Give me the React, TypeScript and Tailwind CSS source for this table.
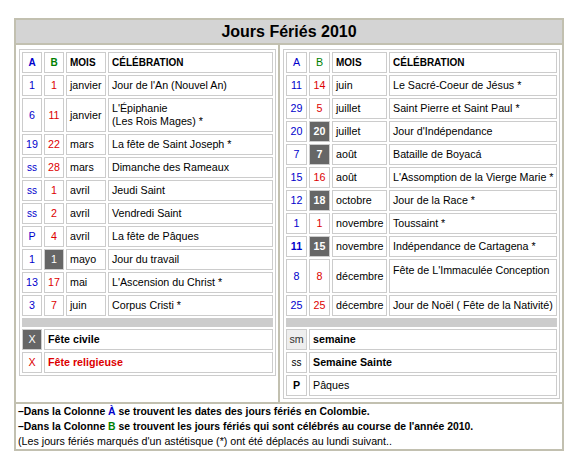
import React from "react";

type Row = {
  a: string;
  b: string;
  m: string;
  c: string[];
  dark?: boolean;
  aBold?: boolean;
  tall?: boolean;
  top?: boolean;
};

const leftRows: Row[] = [
  { a: "1", b: "1", m: "janvier", c: ["Jour de l'An (Nouvel An)"] },
  { a: "6", b: "11", m: "janvier", c: ["L'Épiphanie", "(Les Rois Mages) *"], tall: true },
  { a: "19", b: "22", m: "mars", c: ["La fête de Saint Joseph *"] },
  { a: "ss", b: "28", m: "mars", c: ["Dimanche des Rameaux"] },
  { a: "ss", b: "1", m: "avril", c: ["Jeudi Saint"] },
  { a: "ss", b: "2", m: "avril", c: ["Vendredi Saint"] },
  { a: "P", b: "4", m: "avril", c: ["La fête de Pâques"] },
  { a: "1", b: "1", m: "mayo", c: ["Jour du travail"], dark: true },
  { a: "13", b: "17", m: "mai", c: ["L'Ascension du Christ *"] },
  { a: "3", b: "7", m: "juin", c: ["Corpus Cristi *"] },
];

const rightRows: Row[] = [
  { a: "11", b: "14", m: "juin", c: ["Le Sacré-Coeur de Jésus *"] },
  { a: "29", b: "5", m: "juillet", c: ["Saint Pierre et Saint Paul *"] },
  { a: "20", b: "20", m: "juillet", c: ["Jour d'Indépendance"], dark: true },
  { a: "7", b: "7", m: "août", c: ["Bataille de Boyacá"], dark: true },
  { a: "15", b: "16", m: "août", c: ["L'Assomption de la Vierge Marie *"] },
  { a: "12", b: "18", m: "octobre", c: ["Jour de la Race *"], dark: true },
  { a: "1", b: "1", m: "novembre", c: ["Toussaint *"] },
  { a: "11", b: "15", m: "novembre", c: ["Indépendance de Cartagena *"], dark: true, aBold: true },
  { a: "8", b: "8", m: "décembre", c: ["Fête de L'Immaculée Conception"], tall: true, top: true },
  { a: "25", b: "25", m: "décembre", c: ["Jour de Noël ( Fête de la Nativité)"] },
];

const cell = "border border-[#cccccc] flex items-center h-[21px]";
const head = "text-[10px] font-bold";

function HolidayRows({ rows, boldDark }: { rows: Row[]; boldDark: boolean }) {
  return (
    <>
      {rows.map((r, i) => (
        <React.Fragment key={i}>
          <div
            className={`border border-[#cccccc] flex items-center justify-center text-[#0000cc] ${
              r.aBold ? "font-bold" : ""
            } ${r.a === "ss" ? "text-[10px]" : ""}`}
          >
            {r.a}
          </div>
          <div
            className={`border border-[#cccccc] flex items-center justify-center ${
              r.dark ? `bg-[#666666] text-white ${boldDark ? "font-bold" : ""}` : "text-[#dd0000]"
            }`}
          >
            {r.b}
          </div>
          <div className="border border-[#cccccc] flex items-center pl-[3px] whitespace-nowrap">{r.m}</div>
          <div
            className={`border border-[#cccccc] flex flex-col pl-[3px] leading-[13px] whitespace-nowrap ${
              r.tall ? "h-[34px]" : "h-[21px]"
            } ${r.top ? "justify-start pt-[4px]" : "justify-center"}`}
          >
            {r.c.map((t, j) => (
              <span key={j}>{t}</span>
            ))}
          </div>
        </React.Fragment>
      ))}
    </>
  );
}

export default function App() {
  return (
    <div className="font-['Liberation_Sans',Arial,sans-serif] text-[10.7px] text-black bg-white w-[576px] h-[465px] pt-[18px]">
      <div className="ml-[14px] w-[550px] border-2 border-[#c2c0b0]">
        <div className="h-[25px] bg-[#d4d4d4] border-b-2 border-[#c2c0b0] flex items-center justify-center text-[16px] font-bold">
          Jours Fériés 2010
        </div>

        <div className="flex border-b-2 border-[#c2c0b0]">
          <div className="w-[264px] border-r-2 border-[#c2c0b0] pl-[3px] pt-[4px] pb-[3px]">
            <div className="w-[257px] border border-[#cccccc] p-[2px] flex flex-col gap-[2px]">
              <div className="grid grid-cols-[20px_20px_40px_165px] gap-[2px]">
                <div className={`${cell} justify-center ${head} text-[#0000cc]`}>A</div>
                <div className={`${cell} justify-center ${head} text-[#008000]`}>B</div>
                <div className={`${cell} pl-[3px] ${head}`}>MOIS</div>
                <div className={`${cell} pl-[3px] ${head}`}>CÉLÉBRATION</div>
                <HolidayRows rows={leftRows} boldDark={false} />
              </div>
              <div className="h-[9px] bg-[#cccccc]" />
              <div className="grid grid-cols-[20px_229px] gap-[2px]">
                <div className={`${cell} justify-center bg-[#666666] text-white`}>X</div>
                <div className={`${cell} pl-[3px] font-bold`}>Fête civile</div>
                <div className={`${cell} justify-center text-[#dd0000]`}>X</div>
                <div className={`${cell} pl-[3px] font-bold text-[#dd0000]`}>Fête religieuse</div>
              </div>
            </div>
          </div>

          <div className="flex-1 pl-[3px] pt-[4px] pb-[3px]">
            <div className="w-[277px] border border-[#cccccc] p-[2px] flex flex-col gap-[2px]">
              <div className="grid grid-cols-[21px_21px_55px_168px] gap-[2px]">
                <div className={`${cell} justify-center text-[#0000cc]`}>A</div>
                <div className={`${cell} justify-center text-[#008000]`}>B</div>
                <div className={`${cell} pl-[3px] ${head}`}>MOIS</div>
                <div className={`${cell} pl-[3px] ${head}`}>CÉLÉBRATION</div>
                <HolidayRows rows={rightRows} boldDark={true} />
              </div>
              <div className="h-[9px] bg-[#cccccc]" />
              <div className="grid grid-cols-[21px_248px] gap-[2px]">
                <div className={`${cell} justify-center bg-[#eeeeee] text-[#333333]`}>sm</div>
                <div className={`${cell} pl-[3px] font-bold`}>semaine</div>
                <div className={`${cell} justify-center text-[10px]`}>ss</div>
                <div className={`${cell} pl-[3px] font-bold`}>Semaine Sainte</div>
                <div className={`${cell} justify-center font-bold`}>P</div>
                <div className={`${cell} pl-[3px]`}>Pâques</div>
              </div>
            </div>
          </div>
        </div>

        <div className="pl-[2px] leading-[15px] whitespace-nowrap">
          <p className="font-bold text-[10.4px]">
            –Dans la Colonne <span className="text-[#0000cc]">À</span> se trouvent les dates des jours fériés en Colombie.
          </p>
          <p className="font-bold text-[10.4px]">
            –Dans la Colonne <span className="text-[#008000]">B</span> se trouvent les jours fériés qui sont célébrés au
            course de l'année 2010.
          </p>
          <p>(Les jours fériés marqués d'un astétisque (*) ont été déplacés au lundi suivant..</p>
        </div>
      </div>
    </div>
  );
}
